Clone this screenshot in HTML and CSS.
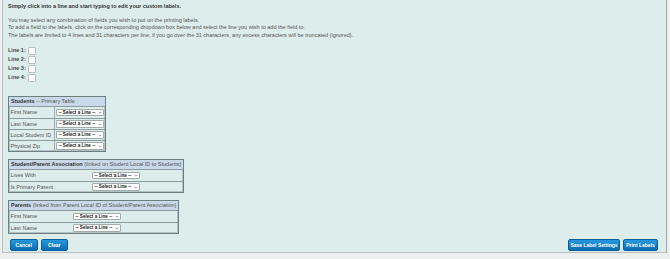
FILE: index.html
```html
<!DOCTYPE html>
<html>
<head>
<meta charset="utf-8">
<link rel="stylesheet" href="styles.css">
</head>
<body>
<div class="panel">
  <p class="intro">Simply click into a line and start typing to edit your custom labels.</p>
  <div class="help">
    <div>You may select any combination of fields you wish to put on the printing labels.</div>
    <div>To add a field to the labels, click on the corresponding dropdown box below and select the line you wish to add the field to.</div>
    <div>The labels are limited to 4 lines and 31 characters per line; if you go over the 31 characters, any excess characters will be truncated (ignored).</div>
  </div>
  <div class="lines">
    <div class="line-row"><span class="line-label">Line 1:</span><span class="box"></span></div>
    <div class="line-row"><span class="line-label">Line 2:</span><span class="box"></span></div>
    <div class="line-row"><span class="line-label">Line 3:</span><span class="box"></span></div>
    <div class="line-row"><span class="line-label">Line 4:</span><span class="box"></span></div>
  </div>

  <div class="tbl t-students">
    <div class="tbl-head"><b>Students</b> -- Primary Table</div>
    <div class="tbl-row"><span class="cell-label">First Name</span><span class="cell-sel"><span class="sel">-- Select a Line --<svg viewBox="0 0 6 4" class="chev"><path d="M1 1l2 2 2-2" /></svg></span></span></div>
    <div class="tbl-row"><span class="cell-label">Last Name</span><span class="cell-sel"><span class="sel">-- Select a Line --<svg viewBox="0 0 6 4" class="chev"><path d="M1 1l2 2 2-2" /></svg></span></span></div>
    <div class="tbl-row"><span class="cell-label">Local Student ID</span><span class="cell-sel"><span class="sel">-- Select a Line --<svg viewBox="0 0 6 4" class="chev"><path d="M1 1l2 2 2-2" /></svg></span></span></div>
    <div class="tbl-row"><span class="cell-label">Physical Zip</span><span class="cell-sel"><span class="sel">-- Select a Line --<svg viewBox="0 0 6 4" class="chev"><path d="M1 1l2 2 2-2" /></svg></span></span></div>
  </div>

  <div class="tbl t-spa">
    <div class="tbl-head"><b>Student/Parent Association</b> (linked on Student Local ID to Students)</div>
    <div class="tbl-row"><span class="cell-label">Lives With</span><span class="cell-sel"><span class="sel">-- Select a Line --<svg viewBox="0 0 6 4" class="chev"><path d="M1 1l2 2 2-2" /></svg></span></span></div>
    <div class="tbl-row"><span class="cell-label">Is Primary Parent</span><span class="cell-sel"><span class="sel">-- Select a Line --<svg viewBox="0 0 6 4" class="chev"><path d="M1 1l2 2 2-2" /></svg></span></span></div>
  </div>

  <div class="tbl t-parents">
    <div class="tbl-head"><b>Parents</b> (linked from Parent Local ID of Student/Parent Association)</div>
    <div class="tbl-row"><span class="cell-label">First Name</span><span class="cell-sel"><span class="sel">-- Select a Line --<svg viewBox="0 0 6 4" class="chev"><path d="M1 1l2 2 2-2" /></svg></span></span></div>
    <div class="tbl-row"><span class="cell-label">Last Name</span><span class="cell-sel"><span class="sel">-- Select a Line --<svg viewBox="0 0 6 4" class="chev"><path d="M1 1l2 2 2-2" /></svg></span></span></div>
  </div>

  <div class="actions">
    <div class="btn-group">
      <button class="btn">Cancel</button>
      <button class="btn">Clear</button>
    </div>
    <div class="btn-group">
      <button class="btn btn-wide">Save Label Settings</button>
      <button class="btn btn-mid">Print Labels</button>
    </div>
  </div>
</div>
</body>
</html>
```

FILE: styles.css
```css
html, body {
  margin: 0;
  padding: 0;
  background: #eef0f0;
  font-family: "Liberation Sans", Arial, sans-serif;
}

.panel {
  box-sizing: border-box;
  width: 665px;
  height: 253px;
  margin-left: 2px;
  padding: 3px 8px 0 5px;
  background: #dcedec;
  border-left: 1px solid #b6c0c0;
  border-right: 1px solid #9ea6a6;
  border-bottom: 1px solid #b7bebe;
  color: #555;
  font-size: 5.5px;
  line-height: 7.5px;
}

.intro {
  margin: 0;
  font-weight: bold;
  color: #333;
}

.help {
  margin-top: 6px;
  color: #555;
}

.lines {
  margin-top: 7px;
}

.line-row {
  display: flex;
  align-items: center;
  height: 9px;
}

.line-label {
  font-weight: bold;
  color: #444;
  width: 20px;
}

.box {
  box-sizing: border-box;
  width: 8px;
  height: 8px;
  background: #fff;
  border: 1px solid #b9c0c0;
  border-radius: 1px;
}

.tbl {
  box-sizing: border-box;
  border: 1px solid #6f7f81;
  box-shadow: inset 0 0 0 1px #b3c2c3;
  margin-top: 14px;
}

.t-students { width: 98px; }
.t-spa { width: 176px; margin-top: 7px; }
.t-parents { width: 171px; margin-top: 7px; }

.tbl-head {
  height: 9px;
  line-height: 9px;
  padding-left: 2px;
  background: #c9d9ea;
  border-bottom: 1px solid #8c9b9c;
  color: #555;
  white-space: nowrap;
}

.tbl-head b { color: #333; }

.tbl-row {
  display: grid;
  height: 10px;
  border-top: 1px solid #8c9b9c;
}

.tbl-row:nth-child(2) { border-top: none; height: 11px; }

.t-students .tbl-row { grid-template-columns: 46px 1fr; }
.t-spa .tbl-row { grid-template-columns: 82px 1fr; }
.t-parents .tbl-row { grid-template-columns: 63px 1fr; }

.cell-label {
  padding-left: 1.5px;
  line-height: 10px;
  color: #555;
  border-right: 1px solid #9fadae;
  white-space: nowrap;
  overflow: hidden;
}

.t-spa .cell-label, .t-parents .cell-label { border-right: none; }

.cell-sel {
  display: flex;
  align-items: center;
  padding-left: 1px;
}

.sel {
  box-sizing: border-box;
  display: flex;
  align-items: center;
  justify-content: space-between;
  width: 48px;
  height: 7.5px;
  padding: 0 1px 0 1.5px;
  background: #fff;
  border: 1px solid #a4abab;
  border-radius: 1px;
  font-weight: bold;
  font-size: 4.6px;
  color: #222;
  white-space: nowrap;
}

.chev {
  width: 4px;
  height: 3px;
  flex: none;
  fill: none;
  stroke: #555;
  stroke-width: 0.9;
}

.actions {
  display: flex;
  justify-content: space-between;
  margin-top: 5px;
  padding-left: 2px;
}

.btn-group {
  display: flex;
  gap: 3px;
}

.btn {
  box-sizing: border-box;
  width: 27.5px;
  height: 12px;
  padding: 0;
  border: 1px solid #0a5e9c;
  border-radius: 2px;
  background: linear-gradient(#2599de, #0b6db3);
  color: #fff;
  font-family: "Liberation Sans", Arial, sans-serif;
  font-weight: bold;
  font-size: 5px;
  line-height: 10px;
}

.btn-wide { width: 52px; }
.btn-mid { width: 35px; }
```
